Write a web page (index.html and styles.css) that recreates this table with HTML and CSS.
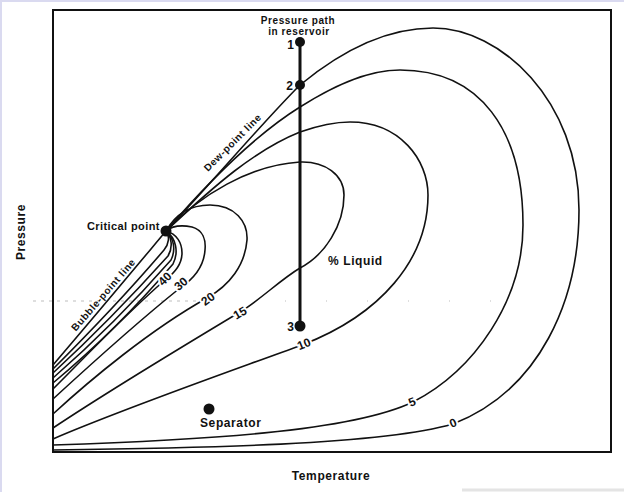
FILE: index.html
```html
<!DOCTYPE html>
<html lang="en">
<head>
<meta charset="utf-8">
<title>Phase diagram – retrograde condensate</title>
<link rel="stylesheet" href="styles.css">
</head>
<body>
<div class="sheet">
  <svg class="plot" viewBox="2 2 622 490" width="622" height="490" xmlns="http://www.w3.org/2000/svg">
    <!-- scan artefacts -->
    <line class="artefact" x1="33" y1="301" x2="205" y2="301"/>
    <line class="artefact sparse" x1="285" y1="301" x2="520" y2="301"/>
    <line class="greybar" x1="462" y1="490" x2="624" y2="490"/>

    <!-- frame -->
    <rect class="frame" x="53" y="10" width="558" height="442"/>

    <!-- bubble-point cluster -->
    <path class="curve" d="M166,231 C140,262 100,310 53,365"/>
    <path class="curve" d="M166,231 C170,236 169,244 164,250 C130,290 90,332 53,369"/>
    <path class="curve" d="M166,231 C172,237 173,248 168,256 C132,296 92,337 53,373"/>
    <path class="curve" d="M166,231 C174,238 176,250 171,260 C135,301 93,343 53,378"/>
    <path class="curve" d="M166,231 C176,238 179,252 173,264 C138,305 95,348 53,383"/>
    <!-- 40 -->
    <path class="curve" d="M166,231 C177,234 182,243 182,253 C182,263 176,272 165,280 C130,310 90,352 53,389"/>
    <!-- 30 -->
    <path class="curve" d="M166,231 C172,226 182,225 192,227 C203,230 206,240 205,250 C204,265 195,278 180,288 C140,320 90,365 53,399"/>
    <!-- 20 -->
    <path class="curve" d="M166,231 C175,215 190,205 210,205 C235,205 248,222 247,240 C245,265 230,285 207,298 C150,330 90,380 53,414"/>
    <!-- 15 -->
    <path class="curve" d="M166,231 C200,195 250,165 300,162 C325,161 344,175 344,195 C344,225 325,255 300,268 C280,280 260,300 240,312 C180,348 110,390 53,428"/>
    <!-- 10 -->
    <path class="curve" d="M166,231 C215,185 255,150 300,132 C320,125 335,122 350,122 C400,122 428,160 428,195 C428,260 380,315 302,345 C220,375 120,410 53,439"/>
    <!-- 5 -->
    <path class="curve" d="M166,231 C210,180 255,135 300,107 C330,88 365,70 400,70 C480,70 523,130 523,225 C523,300 475,370 413,402 C350,432 200,440 53,445"/>
    <!-- 0 / dew-point line -->
    <path class="curve" d="M166,231 C210,185 260,125 300,85 C340,52 385,28 433,28 C500,28 579,100 579,210 C579,300 540,390 453,424 C380,445 200,448 53,450"/>

    <!-- pressure path -->
    <line class="path-line" x1="300" y1="42" x2="300" y2="326"/>
    <circle class="dot" cx="300" cy="42" r="5"/>
    <circle class="dot" cx="300" cy="85" r="5"/>
    <circle class="dot" cx="300" cy="326" r="5.5"/>
    <circle class="dot" cx="166" cy="231" r="5.5"/>
    <circle class="dot" cx="209" cy="409" r="5.5"/>

    <!-- contour labels -->
    <text class="t num" transform="translate(165 279) rotate(-45)">40</text>
    <text class="t num" transform="translate(181 284) rotate(-40)">30</text>
    <text class="t num" transform="translate(208 299) rotate(-37)">20</text>
    <text class="t num" transform="translate(240 313) rotate(-30)">15</text>
    <text class="t num" transform="translate(304 344) rotate(-22)">10</text>
    <text class="t num" transform="translate(412 402) rotate(-22)">5</text>
    <text class="t num" transform="translate(453 423) rotate(-22)">0</text>

    <!-- annotations -->
    <text class="t head mid" x="298" y="24">Pressure path</text>
    <text class="t head mid" x="299" y="35">in reservoir</text>
    <text class="t digit end" x="294" y="49">1</text>
    <text class="t digit end" x="293" y="90">2</text>
    <text class="t digit end" x="294" y="331">3</text>
    <text class="t small" x="87" y="230">Critical point</text>
    <text class="t tiny mid" transform="translate(235 145) rotate(-45)">Dew-point line</text>
    <text class="t tiny mid" transform="translate(106 297) rotate(-49)">Bubble-point line</text>
    <text class="t label" x="328" y="265">% Liquid</text>
    <text class="t label" x="200" y="427">Separator</text>
    <text class="t label mid" x="331" y="480">Temperature</text>
    <text class="t label mid" transform="translate(25 232) rotate(-90)">Pressure</text>
  </svg>
</div>
</body>
</html>
```

FILE: styles.css
```css
html, body {
  margin: 0;
  padding: 0;
  background: #ffffff;
}

.sheet {
  width: 622px;
  height: 490px;
  border-top: 2px solid #dadaf0;
  border-left: 2px solid #dadaf0;
  background: #ffffff;
  overflow: hidden;
}

.plot {
  display: block;
}

.frame {
  fill: none;
  stroke: #111111;
  stroke-width: 2;
}

.curve {
  fill: none;
  stroke: #111111;
  stroke-width: 1.6;
  stroke-linecap: round;
}

.path-line {
  stroke: #111111;
  stroke-width: 3;
}

.dot {
  fill: #111111;
}

.artefact {
  stroke: #bdbdbd;
  stroke-width: 1;
  stroke-dasharray: 3 5;
}

.artefact.sparse {
  stroke-dasharray: 1 40;
}

.greybar {
  stroke: #e4e4e4;
  stroke-width: 3;
}

.t {
  font-family: "Liberation Sans", Arial, sans-serif;
  font-weight: 700;
  fill: #111111;
}

.mid {
  text-anchor: middle;
}

.end {
  text-anchor: end;
}

.num {
  font-size: 12px;
  text-anchor: middle;
  dominant-baseline: central;
  paint-order: stroke;
  stroke: #ffffff;
  stroke-width: 4px;
  stroke-linejoin: round;
}

.head {
  font-size: 10px;
  letter-spacing: 0.6px;
}

.small {
  font-size: 11px;
  letter-spacing: 0.4px;
}

.tiny {
  font-size: 10px;
  letter-spacing: 0.6px;
}

.digit {
  font-size: 12px;
}

.label {
  font-size: 12px;
  letter-spacing: 0.6px;
}
```
